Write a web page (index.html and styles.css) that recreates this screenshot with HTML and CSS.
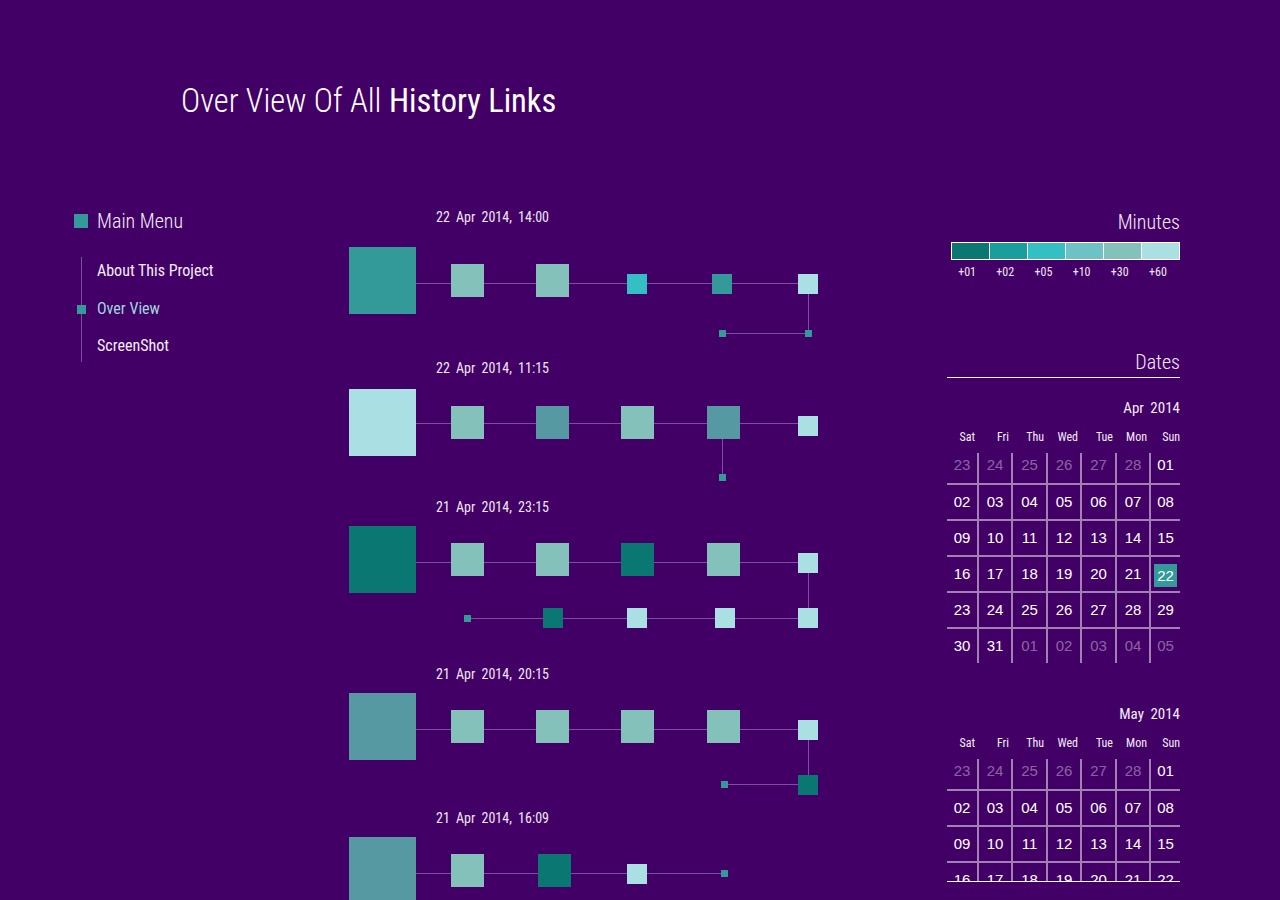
FILE: index.html
```html
<!DOCTYPE html>
<html>
<head>
<meta charset="utf-8">
<link rel="stylesheet" href="styles.css">
</head>
<body>
<h1 class="title"><span class="light">Over View Of All</span> History Links</h1>
<div class="main">
  <nav class="menu">
    <div class="menu-head"><span class="menu-square"></span>Main Menu</div>
    <ul class="menu-list">
      <li>About This Project</li>
      <li class="active">Over View</li>
      <li>ScreenShot</li>
    </ul>
  </nav>

  <section class="timeline">
    <div class="tl-row">
      <div class="tl-date">22 Apr 2014, 14:00</div>
      <svg class="tl-svg" width="480" height="133">
        <g class="ln">
          <line x1="33" y1="57.5" x2="459" y2="57.5"/>
          <line x1="459.5" y1="58" x2="459.5" y2="107"/>
          <line x1="373" y1="107.5" x2="459" y2="107.5"/>
        </g>
        <rect x="0" y="21" width="67" height="67" fill="#339999"/>
        <rect x="102" y="38" width="33" height="33" fill="#85c1bb"/>
        <rect x="187" y="38" width="33" height="33" fill="#85c1bb"/>
        <rect x="278" y="48" width="20" height="20" fill="#33bfc4"/>
        <rect x="363" y="48" width="20" height="20" fill="#339999"/>
        <rect x="449" y="48" width="20" height="20" fill="#aadfe3"/>
        <rect x="370" y="104" width="7" height="7" fill="#339999"/>
        <rect x="456" y="104" width="7" height="7" fill="#339999"/>
      </svg>
    </div>
    <div class="tl-row">
      <div class="tl-date">22 Apr 2014, 11:15</div>
      <svg class="tl-svg" width="480" height="121">
        <g class="ln">
          <line x1="33" y1="46.5" x2="459" y2="46.5"/>
          <line x1="373.5" y1="62" x2="373.5" y2="97"/>
        </g>
        <rect x="0" y="12" width="67" height="67" fill="#aadfe3"/>
        <rect x="102" y="29" width="33" height="33" fill="#85c1bb"/>
        <rect x="187" y="29" width="33" height="33" fill="#5699a2"/>
        <rect x="272" y="29" width="33" height="33" fill="#85c1bb"/>
        <rect x="358" y="29" width="33" height="33" fill="#5699a2"/>
        <rect x="449" y="39" width="20" height="20" fill="#aadfe3"/>
        <rect x="370" y="97" width="7" height="7" fill="#339999"/>
      </svg>
    </div>
    <div class="tl-row">
      <div class="tl-date">21 Apr 2014, 23:15</div>
      <svg class="tl-svg" width="480" height="149">
        <g class="ln">
          <line x1="33" y1="46.5" x2="459" y2="46.5"/>
          <line x1="459.5" y1="57" x2="459.5" y2="92"/>
          <line x1="118" y1="102.5" x2="459" y2="102.5"/>
        </g>
        <rect x="0" y="10" width="67" height="67" fill="#0b7773"/>
        <rect x="102" y="27" width="33" height="33" fill="#85c1bb"/>
        <rect x="187" y="27" width="33" height="33" fill="#85c1bb"/>
        <rect x="272" y="27" width="33" height="33" fill="#0b7773"/>
        <rect x="358" y="27" width="33" height="33" fill="#85c1bb"/>
        <rect x="449" y="37" width="20" height="20" fill="#aadfe3"/>
        <rect x="115" y="99" width="7" height="7" fill="#339999"/>
        <rect x="194" y="92" width="20" height="20" fill="#0b7773"/>
        <rect x="278" y="92" width="20" height="20" fill="#aadfe3"/>
        <rect x="366" y="92" width="20" height="20" fill="#aadfe3"/>
        <rect x="449" y="92" width="20" height="20" fill="#aadfe3"/>
      </svg>
    </div>
    <div class="tl-row">
      <div class="tl-date">21 Apr 2014, 20:15</div>
      <svg class="tl-svg" width="480" height="126">
        <g class="ln">
          <line x1="33" y1="46.5" x2="459" y2="46.5"/>
          <line x1="459.5" y1="57" x2="459.5" y2="92"/>
          <line x1="375" y1="101.5" x2="459" y2="101.5"/>
        </g>
        <rect x="0" y="10" width="67" height="67" fill="#5699a2"/>
        <rect x="102" y="27" width="33" height="33" fill="#85c1bb"/>
        <rect x="187" y="27" width="33" height="33" fill="#85c1bb"/>
        <rect x="272" y="27" width="33" height="33" fill="#85c1bb"/>
        <rect x="358" y="27" width="33" height="33" fill="#85c1bb"/>
        <rect x="449" y="37" width="20" height="20" fill="#aadfe3"/>
        <rect x="449" y="92" width="20" height="20" fill="#0b7773"/>
        <rect x="372" y="98" width="7" height="7" fill="#339999"/>
      </svg>
    </div>
    <div class="tl-row">
      <div class="tl-date">21 Apr 2014, 16:09</div>
      <svg class="tl-svg" width="480" height="80">
        <g class="ln">
          <line x1="33" y1="46.5" x2="375" y2="46.5"/>
        </g>
        <rect x="0" y="10" width="67" height="67" fill="#5699a2"/>
        <rect x="102" y="27" width="33" height="33" fill="#85c1bb"/>
        <rect x="189" y="27" width="33" height="33" fill="#0b7773"/>
        <rect x="278" y="37" width="20" height="20" fill="#aadfe3"/>
        <rect x="372" y="43" width="7" height="7" fill="#339999"/>
      </svg>
    </div>
  </section>

  <aside class="side">
    <h2 class="side-head">Minutes</h2>
    <div class="legend">
      <span class="c1"></span><span class="c2"></span><span class="c3"></span><span class="c4"></span><span class="c5"></span><span class="c6"></span>
    </div>
    <div class="legend-labels">
      <span>+01</span><span>+02</span><span>+05</span><span>+10</span><span>+30</span><span>+60</span>
    </div>
    <h2 class="side-head dates-head">Dates</h2>
    <div class="dates-scroll">
      <div class="month">
        <div class="month-title">Apr 2014</div>
        <div class="cal-head"><span>Sat</span><span>Fri</span><span>Thu</span><span>Wed</span><span>Tue</span><span>Mon</span><span>Sun</span></div>
        <div class="cal-grid">
          <span class="dim">23</span><span class="dim">24</span><span class="dim">25</span><span class="dim">26</span><span class="dim">27</span><span class="dim">28</span><span>01</span>
          <span>02</span><span>03</span><span>04</span><span>05</span><span>06</span><span>07</span><span>08</span>
          <span>09</span><span>10</span><span>11</span><span>12</span><span>13</span><span>14</span><span>15</span>
          <span>16</span><span>17</span><span>18</span><span>19</span><span>20</span><span>21</span><span><b class="sel">22</b></span>
          <span>23</span><span>24</span><span>25</span><span>26</span><span>27</span><span>28</span><span>29</span>
          <span>30</span><span>31</span><span class="dim">01</span><span class="dim">02</span><span class="dim">03</span><span class="dim">04</span><span class="dim">05</span>
        </div>
      </div>
      <div class="month">
        <div class="month-title">May 2014</div>
        <div class="cal-head"><span>Sat</span><span>Fri</span><span>Thu</span><span>Wed</span><span>Tue</span><span>Mon</span><span>Sun</span></div>
        <div class="cal-grid">
          <span class="dim">23</span><span class="dim">24</span><span class="dim">25</span><span class="dim">26</span><span class="dim">27</span><span class="dim">28</span><span>01</span>
          <span>02</span><span>03</span><span>04</span><span>05</span><span>06</span><span>07</span><span>08</span>
          <span>09</span><span>10</span><span>11</span><span>12</span><span>13</span><span>14</span><span>15</span>
          <span>16</span><span>17</span><span>18</span><span>19</span><span>20</span><span>21</span><span>22</span>
          <span>23</span><span>24</span><span>25</span><span>26</span><span>27</span><span>28</span><span>29</span>
          <span>30</span><span>31</span><span class="dim">01</span><span class="dim">02</span><span class="dim">03</span><span class="dim">04</span><span class="dim">05</span>
        </div>
      </div>
    </div>
  </aside>
</div>
</body>
</html>
```

FILE: styles.css
```css
* { box-sizing: border-box; }
html, body {
  margin: 0;
  padding: 0;
}
body {
  background: #420067;
  color: #fff;
  font-family: "Roboto Condensed", "Liberation Sans Narrow", "DejaVu Sans Condensed", Roboto, sans-serif;
  font-stretch: condensed;
  height: 900px;
  overflow: hidden;
}
.title {
  margin: 81px 0 0 181px;
  font-size: 32.5px;
  line-height: 40px;
  font-weight: 400;
  color: #fff;
}
.title .light { font-weight: 300; }

.main {
  display: flex;
  align-items: flex-start;
  margin-top: 87px;
  padding-left: 74px;
}

/* menu */
.menu { width: 275px; flex: none; }
.menu-head {
  display: flex;
  align-items: center;
  font-size: 20px;
  line-height: 26px;
  font-weight: 300;
  color: #f3eef6;
}
.menu-square {
  width: 14px;
  height: 14px;
  background: #339999;
  margin-right: 9px;
}
.menu-list {
  list-style: none;
  margin: 23px 0 0 7px;
  padding: 1px 0 3px 0;
  border-left: 1px solid #7b4f9e;
  display: flex;
  flex-direction: column;
  gap: 11.5px;
}
.menu-list li {
  position: relative;
  padding-left: 15px;
  font-size: 16px;
  line-height: 26px;
  font-weight: 400;
  color: #f3eef6;
}
.menu-list li.active { color: #9fd7dd; }
.menu-list li.active::before {
  content: "";
  position: absolute;
  left: -5px;
  top: 9px;
  width: 9px;
  height: 9px;
  background: #339999;
}

/* timeline */
.timeline { width: 598px; flex: none; }
.tl-date {
  padding-left: 87px;
  font-size: 14px;
  line-height: 18px;
  height: 18px;
  color: #efe8f2;
  word-spacing: 3px;
}
.tl-svg { display: block; }
.ln line { stroke: #7b4e9e; stroke-width: 1; }

/* side */
.side { width: 233px; flex: none; margin-top: 1px; }
.side-head {
  margin: 0;
  font-size: 20px;
  line-height: 26px;
  font-weight: 300;
  text-align: right;
  color: #f3eef6;
}
.legend {
  display: flex;
  margin: 7px 0 0 4px;
  width: 229px;
  height: 18px;
  border: 1px solid #fff;
}
.legend span { flex: 1; border-left: 1px solid #fff; }
.legend span:first-child { border-left: 0; }
.c1 { background: #0b7773; }
.c2 { background: #199d9d; }
.c3 { background: #33bfc4; }
.c4 { background: #6cc2c4; }
.c5 { background: #85c1bb; }
.c6 { background: #aadfe3; }
.legend-labels {
  display: flex;
  margin: 5px 0 0 1px;
  width: 229px;
  font-size: 12px;
  line-height: 14px;
  color: #efe8f2;
}
.legend-labels span { flex: 1; text-align: center; }

.dates-head {
  margin-top: 70px;
  padding-bottom: 2px;
  border-bottom: 1px solid #fff;
}
.dates-scroll {
  height: 504px;
  overflow: hidden;
  border-bottom: 1px solid #fff;
  padding-top: 20px;
}
.month { margin-bottom: 41px; }
.month-title {
  text-align: right;
  font-size: 15px;
  line-height: 20px;
  word-spacing: 3px;
  color: #f3eef6;
}
.cal-head {
  display: grid;
  grid-template-columns: 30px 34px 35px 34px 35px 34px 31px;
  margin-top: 11px;
  font-size: 12px;
  line-height: 16px;
  color: #f3eef6;
}
.cal-head span { text-align: right; padding-right: 2px; }
.cal-head span:last-child { padding-right: 0; }
.cal-grid {
  display: grid;
  grid-template-columns: 30px 34px 35px 34px 35px 34px 31px;
  margin-top: 8px;
  font-family: "Liberation Sans", Arial, sans-serif;
  font-stretch: normal;
  font-size: 15px;
}
.cal-grid span {
  height: 36px;
  line-height: 34px;
  text-align: center;
  border-top: 2px solid rgba(255, 255, 255, 0.5);
  border-left: 2px solid rgba(255, 255, 255, 0.5);
  color: #fff;
}
.cal-grid span:nth-child(7n+1) { border-left: 0; }
.cal-grid span:nth-child(-n+7) {
  height: 30px;
  line-height: 24px;
  border-top: 0;
}
.cal-grid span.dim { color: rgba(255, 255, 255, 0.4); }
.sel {
  display: inline-block;
  width: 23px;
  height: 23px;
  line-height: 23px;
  font-weight: 400;
  background: #339999;
  vertical-align: middle;
}
```
